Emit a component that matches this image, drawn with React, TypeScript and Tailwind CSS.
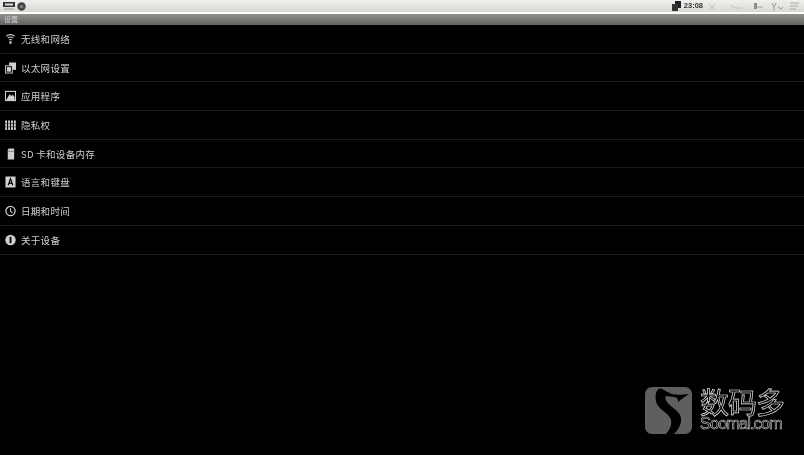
const rows = [
  { name: "无线和网络", icon: "wifi" },
  { name: "以太网设置", icon: "ethernet" },
  { name: "应用程序", icon: "apps" },
  { name: "隐私权", icon: "privacy" },
  { name: "SD 卡和设备内存", icon: "sd" },
  { name: "语言和键盘", icon: "lang" },
  { name: "日期和时间", icon: "clock" },
  { name: "关于设备", icon: "info" },
]

function RowIcon({ type }: { type: string }) {
  return (
    <svg width="11" height="12" viewBox="0 0 12 13" className="shrink-0 text-[#d0d0d0]" fill="none" stroke="currentColor">
      {type === "wifi" && (
        <>
          <path d="M1.5 3.5C4 1.2 8 1.2 10.5 3.5" strokeWidth="1.2" />
          <path d="M3.2 5.6C4.8 4.2 7.2 4.2 8.8 5.6" strokeWidth="1.2" />
          <path d="M4.6 7.6C5.4 7 6.6 7 7.4 7.6" strokeWidth="1.2" />
          <rect x="4.8" y="9" width="2.4" height="2.6" fill="currentColor" stroke="none" />
        </>
      )}
      {type === "ethernet" && (
        <>
          <rect x="4.5" y="0.5" width="7.5" height="8" fill="currentColor" stroke="none" />
          <rect x="0.5" y="4" width="7.5" height="8" fill="#000" strokeWidth="1" />
          <rect x="2" y="5.5" width="4.5" height="5" fill="currentColor" stroke="none" />
        </>
      )}
      {type === "apps" && (
        <>
          <rect x="0.5" y="1.5" width="11" height="10" strokeWidth="1.2" />
          <path d="M1.5 10.5L5 4.5L7 6.5L8.5 5L10.5 7.5V11H1.5Z" fill="currentColor" stroke="none" />
        </>
      )}
      {type === "privacy" && (
        <>
          <path d="M1.2 1.5V12M4.4 1.5V12M7.6 1.5V12M10.8 1.5V12" strokeWidth="2" />
          <path d="M0 5H12M0 8.5H12" stroke="#000" strokeWidth="0.5" />
        </>
      )}
      {type === "sd" && (
        <>
          <path d="M4 0.5H10V12.5H3V2Z" fill="currentColor" stroke="none" />
          <path d="M3 3.6H10" stroke="#555" strokeWidth="0.7" />
        </>
      )}
      {type === "lang" && (
        <>
          <rect x="0.5" y="0.5" width="11" height="12" fill="currentColor" stroke="none" />
          <path d="M3.5 10L6 3L8.5 10M4.4 7.9H7.6" stroke="#000" strokeWidth="1.3" />
        </>
      )}
      {type === "clock" && (
        <>
          <circle cx="6" cy="6.5" r="5" strokeWidth="1.4" />
          <path d="M6 3.5V6.8L8.3 8.5" strokeWidth="1.1" />
        </>
      )}
      {type === "info" && (
        <>
          <circle cx="6" cy="6.5" r="5.7" fill="currentColor" stroke="none" />
          <rect x="5" y="3" width="2" height="7" fill="#000" stroke="none" />
        </>
      )}
    </svg>
  )
}

export default function App() {
  return (
    <div className="relative flex h-[455px] w-[804px] flex-col overflow-hidden bg-black font-['Noto_Sans_CJK_SC','Liberation_Sans',sans-serif] blur-[0.35px]">

      {/* STATUS BAR */}
      <div className="flex h-[14px] shrink-0 items-center justify-between border-b-2 border-white bg-gradient-to-b from-[#f0f0ee] to-[#d8d9d4] pr-[4px]">
        <div className="flex items-center gap-[2px] pl-[3px]">
          <svg width="12" height="9" viewBox="0 0 12 9">
            <rect width="12" height="5" fill="#333" />
            <rect x="2" y="1.5" width="8" height="2" fill="#ddd" />
            <rect x="1" y="6.5" width="10" height="1" fill="#999" />
          </svg>
          <svg width="9" height="9" viewBox="0 0 9 9">
            <circle cx="4.5" cy="4.5" r="4.2" fill="#444" />
            <circle cx="4.5" cy="4.5" r="1.6" fill="#888" />
          </svg>
        </div>

        <div className="flex items-center">
          <svg width="9" height="10" viewBox="0 0 9 10">
            <rect x="3" y="0" width="6" height="7" fill="#222" />
            <rect x="0" y="3" width="6" height="7" fill="#333" />
          </svg>
          <span className="ml-[3px] font-['Liberation_Sans',sans-serif] text-[7.5px] leading-none font-bold text-[#333]">23:08</span>
          <svg width="94" height="10" viewBox="0 0 94 10" className="ml-[3px]" fill="none" stroke="#c0c1bc">
            <path d="M3 3L6 6L9 3M4 9L6 6L8 9" />
            <path d="M24 4L29 7L36 7" />
            <rect x="48" y="2" width="3" height="6" fill="#8e8f8a" stroke="none" />
            <path d="M51 6H57" stroke="#a4a5a0" />
            <path d="M66 2L68 6L70 2M68 6V10M72 6L75 8L77 6" stroke="#9a9b96" />
            <path d="M84 2H93M84 5H92M84 8H90" stroke="#a9aaa5" strokeWidth="1.2" />
          </svg>
        </div>
      </div>

      {/* TITLE */}
      <div className="flex h-[11px] shrink-0 items-center bg-gradient-to-b from-[#8f918d] to-[#626461] pl-[4px]">
        <span className="text-[7px] leading-none text-[#d0d0d0]">设置</span>
      </div>

      {/* LIST */}
      <div className="flex flex-col">
        {rows.map((row) => (
          <div
            key={row.name}
            className="flex h-[28.7px] items-center gap-[5px] border-b border-[#1c1c1c] pl-[5px]"
          >
            <RowIcon type={row.icon} />
            <span className="pt-[1.6px] text-[9.5px] leading-none tracking-[0.3px] text-[#d0d0d0]">{row.name}</span>
          </div>
        ))}
      </div>

      {/* WATERMARK */}
      <div className="absolute top-[387px] left-[645px] flex items-start gap-[8px]">
        <svg width="47" height="47" viewBox="0 0 47 47">
          <rect width="47" height="47" rx="7" fill="#5f5f5f" />
          <path d="M14 1.5C18 1.5 22 5 27 7C32 8.5 39 7.5 44 7C40 10 36 12 33 15C33.5 12 32 10.5 29 10C26 9.5 23 9.5 20.5 9C20 13 22 16 27 20C33 24.5 37 28 36 35C35 40 32 44 29 47H21C25 42 27 38 26 33C25 27 16 24 12.5 18C9.5 13 10 4 14 1.5Z" fill="#000" />
        </svg>
        <div className="flex flex-col items-start">
          <span className="text-[29px] leading-[28px] tracking-[-1px] text-transparent [-webkit-text-stroke:0.7px_#e8e8e8]">数码多</span>
          <span className="font-['Liberation_Sans',sans-serif] text-[16.5px] leading-[16px] tracking-[-1px] text-transparent [-webkit-text-stroke:0.6px_#c8c8c8]">Soomal.com</span>
        </div>
      </div>

    </div>
  )
}
